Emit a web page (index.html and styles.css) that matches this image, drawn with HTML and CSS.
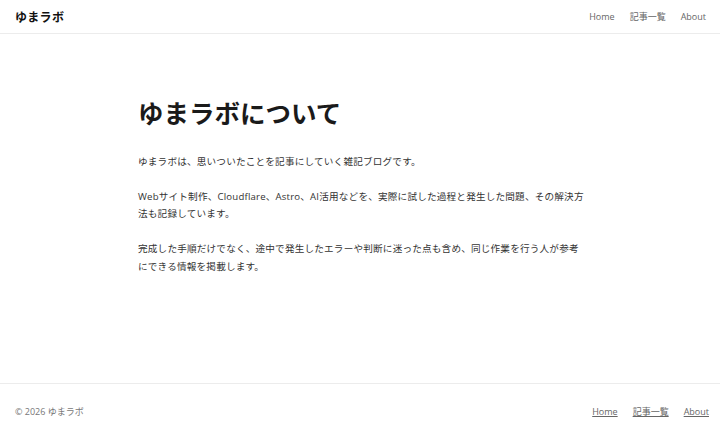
FILE: index.html
```html
<!DOCTYPE html>
<html lang="ja">
<head>
<meta charset="utf-8">
<title>ゆまラボについて</title>
<link rel="stylesheet" href="styles.css">
</head>
<body>
<header class="site-header">
  <a class="logo" href="#">ゆまラボ</a>
  <nav class="nav">
    <a href="#">Home</a>
    <a href="#">記事一覧</a>
    <a href="#">About</a>
  </nav>
</header>
<main class="main">
  <h1 class="title">ゆまラボについて</h1>
  <p>ゆまラボは、思いついたことを記事にしていく雑記ブログです。</p>
  <p>Webサイト制作、Cloudflare、Astro、AI活用などを、実際に試した過程と発生した問題、その解決方法も記録しています。</p>
  <p>完成した手順だけでなく、途中で発生したエラーや判断に迷った点も含め、同じ作業を行う人が参考にできる情報を掲載します。</p>
</main>
<footer class="site-footer">
  <span class="copy">© 2026 ゆまラボ</span>
  <nav class="foot-nav">
    <a href="#">Home</a>
    <a href="#">記事一覧</a>
    <a href="#">About</a>
  </nav>
</footer>
</body>
</html>
```
FILE: styles.css
```css
html, body {
  margin: 0;
  padding: 0;
  background: #fff;
}
body {
  font-family: "Open Sans", "Noto Sans CJK JP", sans-serif;
  color: #222;
  height: 432px;
  display: flex;
  flex-direction: column;
}
a { color: inherit; text-decoration: none; }
.site-header {
  height: 34px;
  border-bottom: 1px solid #ececec;
  display: flex;
  align-items: center;
  justify-content: space-between;
  padding: 0 14px 0 15px;
  box-sizing: border-box;
}
.logo {
  font-weight: 700;
  font-size: 12px;
  color: #111;
  letter-spacing: 0.3px;
}
.nav {
  display: flex;
  gap: 15px;
  font-size: 9px;
  color: #666;
}
.main {
  flex: 1;
  width: 448px;
  margin: 0 auto;
  padding-top: 63px;
  box-sizing: border-box;
  padding-left: 2px;
}
.title {
  font-size: 25.5px;
  font-weight: 700;
  margin: 0 0 23px;
  line-height: 1.3;
  color: #1a1a1a;
}
.main p {
  font-size: 9.6px;
  line-height: 17.4px;
  margin: 0 0 17.4px;
  color: #333;
  letter-spacing: 0.2px;
}
.site-footer {
  flex: 0 0 auto;
  height: 42px;
  border-top: 1px solid #ececec;
  display: flex;
  align-items: center;
  justify-content: space-between;
  padding: 6px 11px 0 15px;
  box-sizing: content-box;
  font-size: 9px;
  color: #777;
}
.foot-nav {
  display: flex;
  gap: 15px;
  color: #666;
}
.foot-nav a {
  text-decoration: underline;
}
```
